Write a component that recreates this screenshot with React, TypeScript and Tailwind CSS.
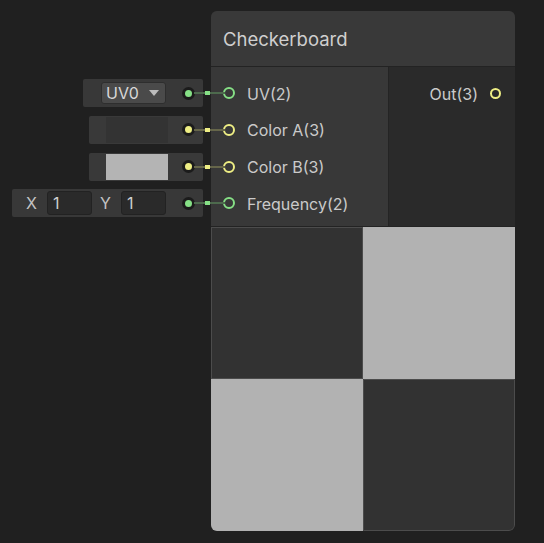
import React from "react";

const GREEN = "#86e086";
const YELLOW = "#eeee84";

function Wire({ color, dim }: { color: string; dim: string }) {
  return (
    <div className="flex items-center h-full ml-[-21px] relative z-10">
      <div className="w-[13px] h-[13px] rounded-full bg-[#1b1b1b] flex items-center justify-center">
        <div className="w-[7px] h-[7px] rounded-full" style={{ background: color }} />
      </div>
      <div className="flex items-center w-[31px] h-[2px] ml-[-1px]" style={{ background: dim }}>
        <div className="ml-[11px] w-[5px] h-[4px]" style={{ background: color }} />
      </div>
    </div>
  );
}

export default function App() {
  const rows = [
    { label: "UV(2)", color: GREEN, dim: "#4d6a4d", kind: "uv" },
    { label: "Color A(3)", color: YELLOW, dim: "#66664a", kind: "ca" },
    { label: "Color B(3)", color: YELLOW, dim: "#66664a", kind: "cb" },
    { label: "Frequency(2)", color: GREEN, dim: "#4d6a4d", kind: "fr" },
  ];
  return (
    <div
      className="w-[544px] h-[543px] bg-[#202020] flex pt-[11px] overflow-hidden text-[#c8c8c8]"
      style={{ fontFamily: "Inter, 'Noto Sans', sans-serif" }}
    >
      {/* left inputs */}
      <div className="w-[225px] shrink-0 flex flex-col pt-[64px] relative z-10">
        {rows.map((r) => (
          <div key={r.kind} className="h-[36.67px] flex items-center justify-end">
            {r.kind === "uv" && (
              <div className="w-[120px] h-[28px] bg-[#383838] rounded-[2px] flex items-center pl-[18px]">
                <div className="w-[65px] h-[22px] bg-[#4a4a4a] border border-[#2e2e2e] rounded-[3px] flex items-center pl-[4px] text-[16px] text-[#d8d8d8]">
                  <span>UV0</span>
                  <svg width="10" height="6" viewBox="0 0 10 6" className="ml-[10px]">
                    <path d="M0 0 L10 0 L5 6 Z" fill="#bcbcbc" />
                  </svg>
                </div>
                <div className="flex-1" />
              </div>
            )}
            {(r.kind === "ca" || r.kind === "cb") && (
              <div className="w-[114px] h-[28px] bg-[#393939] rounded-[2px] flex items-center pl-[17px]">
                <div
                  className={`w-[62px] h-[26px] ${r.kind === "ca" ? "bg-[#333333]" : "bg-[#b4b4b4]"}`}
                />
              </div>
            )}
            {r.kind === "fr" && (
              <div className="w-[191px] h-[28px] bg-[#383838] rounded-[2px] flex items-center pl-[14px] text-[16px]">
                <span className="w-[10px] text-[#c4c4c4]">X</span>
                <div className="ml-[11px] w-[45px] h-[24px] bg-[#2a2a2a] border border-[#222] rounded-[3px] flex items-center pl-[5px] text-[#d0d0d0]">
                  1
                </div>
                <span className="ml-[8px] w-[13px] text-[#c4c4c4]">Y</span>
                <div className="ml-[8px] w-[45px] h-[24px] bg-[#2a2a2a] border border-[#222] rounded-[3px] flex items-center pl-[5px] text-[#d0d0d0]">
                  1
                </div>
              </div>
            )}
            <Wire color={r.color} dim={r.dim} />
          </div>
        ))}
      </div>

      {/* node */}
      <div className="w-[304px] h-[520px] shrink-0 flex flex-col rounded-[6px] overflow-hidden bg-[#2a2a2a] ml-[-14px] relative">
        <div className="h-[56px] bg-[#393939] flex items-center pl-[12px] pt-[3px] text-[18.5px] text-[#cfcfcf] border-b border-[#232323]">
          Checkerboard
        </div>
        <div className="h-[160px] flex border-b border-[#232323]">
          <div className="w-[178px] bg-[#383838] border-r border-[#242424] flex flex-col pt-[8px]">
            {rows.map((r) => (
              <div key={r.kind} className="h-[36.67px] flex items-center pl-[12px]">
                <div
                  className="w-[12px] h-[12px] rounded-full border-2"
                  style={{ borderColor: r.color }}
                />
                <span className="ml-[12px] pt-[1px] text-[16px] text-[#cacaca]">{r.label}</span>
              </div>
            ))}
          </div>
          <div className="flex-1 flex flex-col pt-[8px]">
            <div className="h-[36.67px] flex items-center justify-end pr-[14px]">
              <span className="text-[16px] pt-[1px] text-[#cacaca]">Out(3)</span>
              <div
                className="ml-[12px] w-[11px] h-[11px] rounded-full border-2"
                style={{ borderColor: YELLOW }}
              />
            </div>
          </div>
        </div>
        <div className="flex-1 grid grid-cols-2 grid-rows-2">
          <div className="bg-[#323232] border border-[#4c4c4c]" />
          <div className="bg-[#b2b2b2]" />
          <div className="bg-[#b2b2b2]" />
          <div className="bg-[#323232] border border-[#4c4c4c] rounded-br-[6px]" />
        </div>
      </div>
    </div>
  );
}
